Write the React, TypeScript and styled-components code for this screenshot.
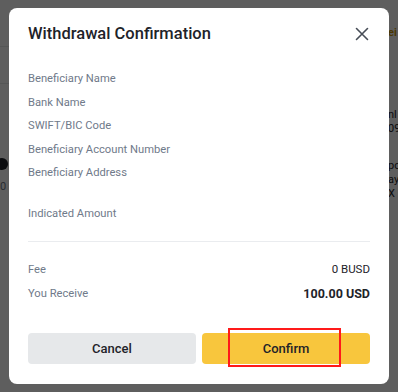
import React from 'react';
import styled, { createGlobalStyle } from 'styled-components';

const GlobalStyle = createGlobalStyle`
  html, body {
    margin: 0;
    padding: 0;
    background: #ffffff;
  }
  body {
    font-family: Roboto, "Noto Sans", Arial, sans-serif;
  }
`;

const Screen = styled.div`
  position: relative;
  width: 398px;
  height: 392px;
  overflow: hidden;
`;

// page behind the dialog, only its edges are visible
const BackPage = styled.div`
  display: flex;
  justify-content: space-between;
  height: 100%;
  background: #ffffff;
`;

const LeftEdge = styled.div`
  width: 10px;
  display: flex;
  flex-direction: column;
`;

const EdgeBand = styled.div<{ $h: number; $line?: boolean }>`
  height: ${(p) => p.$h}px;
  border-bottom: ${(p) => (p.$line ? '1px solid #e6e8ea' : 'none')};
  flex-shrink: 0;
`;

const Dot = styled.div`
  width: 12px;
  height: 12px;
  border-radius: 50%;
  background: #1e2329;
  margin-left: -4px;
`;

const EdgeText = styled.div<{ $color?: string; $bold?: boolean }>`
  font-size: 11px;
  line-height: 14px;
  white-space: nowrap;
  color: ${(p) => p.$color || '#1e2329'};
  font-weight: ${(p) => (p.$bold ? 600 : 400)};
`;

const RightEdge = styled.div`
  width: 10px;
  display: flex;
  flex-direction: column;
`;

const Overlay = styled.div`
  position: absolute;
  inset: 0;
  background: rgba(0, 0, 0, 0.63);
  display: flex;
  align-items: flex-start;
  justify-content: center;
  padding-top: 8px;
`;

const Modal = styled.div`
  width: 380px;
  height: 376px;
  box-sizing: border-box;
  background: #ffffff;
  border-radius: 8px;
  padding: 0 19px 20px 19px;
  display: flex;
  flex-direction: column;
`;

const Header = styled.div`
  display: flex;
  align-items: center;
  justify-content: space-between;
  padding-top: 14px;
  height: 24px;
`;

const Title = styled.h2`
  margin: 0;
  font-size: 16.5px;
  line-height: 24px;
  font-weight: 500;
  color: #1e2329;
`;

const CloseButton = styled.button`
  border: none;
  background: none;
  padding: 0;
  margin-right: 1px;
  width: 14px;
  height: 14px;
  display: flex;
  cursor: pointer;
`;

const Details = styled.div`
  display: flex;
  flex-direction: column;
  margin-top: 21px;
`;

const Row = styled.div<{ $h?: number; $top?: number }>`
  display: flex;
  align-items: center;
  justify-content: space-between;
  height: ${(p) => p.$h || 23}px;
  margin-top: ${(p) => p.$top || 0}px;
`;

const Label = styled.span`
  font-size: 11.2px;
  color: #707a8a;
`;

const Value = styled.span<{ $strong?: boolean }>`
  font-size: ${(p) => (p.$strong ? 12.5 : 11.5)}px;
  font-weight: ${(p) => (p.$strong ? 700 : 400)};
  color: #1e2329;
`;

const Divider = styled.div`
  height: 1px;
  background: #eaecef;
  margin: 16px 0 15px;
`;

const Actions = styled.div`
  display: grid;
  grid-template-columns: 1fr 1fr;
  gap: 6px;
  margin-top: auto;
`;

const ActionButton = styled.button<{ $primary?: boolean }>`
  position: relative;
  height: 31px;
  border: none;
  border-radius: 4px;
  font-family: inherit;
  font-size: 13px;
  font-weight: 500;
  color: #1e2329;
  background: ${(p) => (p.$primary ? '#f8c63d' : '#e6e8ea')};
  cursor: pointer;
`;

const Highlight = styled.span`
  position: absolute;
  left: 26px;
  top: -5px;
  width: 113px;
  height: 39px;
  box-sizing: border-box;
  border: 2px solid #ff1a1a;
  pointer-events: none;
`;

const fields = [
  'Beneficiary Name',
  'Bank Name',
  'SWIFT/BIC Code',
  'Beneficiary Account Number',
  'Beneficiary Address',
];

export default function App() {
  return (
    <Screen>
      <GlobalStyle />
      <BackPage>
        <LeftEdge>
          <EdgeBand $h={46} $line />
          <EdgeBand $h={36} $line />
          <EdgeBand $h={74} />
          <Dot />
          <EdgeBand $h={10} />
          <EdgeText $color="#707a8a">0</EdgeText>
        </LeftEdge>
        <RightEdge>
          <EdgeBand $h={26} />
          <EdgeText $color="#c99400" $bold>ei</EdgeText>
          <EdgeBand $h={68} />
          <EdgeText>nl</EdgeText>
          <EdgeText>09</EdgeText>
          <EdgeBand $h={23} />
          <EdgeText>po</EdgeText>
          <EdgeText>ay</EdgeText>
          <EdgeText>X</EdgeText>
        </RightEdge>
      </BackPage>
      <Overlay>
        <Modal>
          <Header>
            <Title>Withdrawal Confirmation</Title>
            <CloseButton aria-label="Close">
              <svg width="14" height="14" viewBox="0 0 14 14">
                <path d="M1.5 1.5 L12.5 12.5 M12.5 1.5 L1.5 12.5" stroke="#474d57" strokeWidth="1.6" strokeLinecap="round" />
              </svg>
            </CloseButton>
          </Header>
          <Details>
            {fields.map((f) => (
              <Row key={f} $h={23.5}>
                <Label>{f}</Label>
              </Row>
            ))}
            <Row $top={17}>
              <Label>Indicated Amount</Label>
            </Row>
            <Divider />
            <Row $h={25}>
              <Label>Fee</Label>
              <Value>0 BUSD</Value>
            </Row>
            <Row $h={24}>
              <Label>You Receive</Label>
              <Value $strong>100.00 USD</Value>
            </Row>
          </Details>
          <Actions>
            <ActionButton>Cancel</ActionButton>
            <ActionButton $primary>
              Confirm
              <Highlight />
            </ActionButton>
          </Actions>
        </Modal>
      </Overlay>
    </Screen>
  );
}
